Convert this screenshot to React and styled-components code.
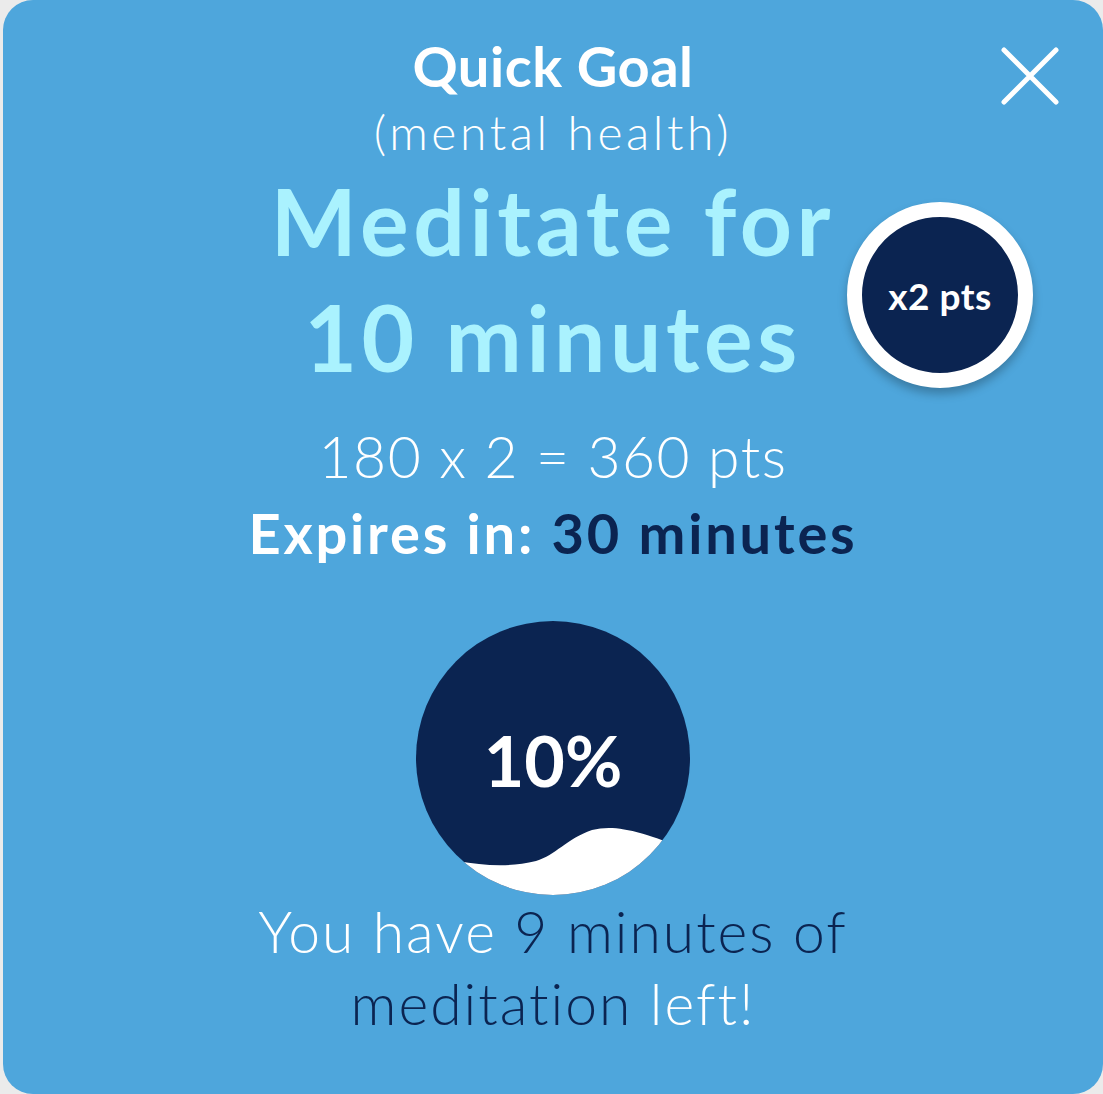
import React from 'react'
import styled, { createGlobalStyle } from 'styled-components'

const GlobalStyle = createGlobalStyle`
  html, body {
    margin: 0;
    padding: 0;
    background: #ebebeb;
  }
  body {
    font-family: Lato, "Open Sans", sans-serif;
    font-variant-ligatures: none;
  }
`

const navy = '#0b2451'
const sky = '#4ea6dc'
const cyan = '#aaf2fe'

const Card = styled.div`
  position: relative;
  box-sizing: border-box;
  margin-left: 3px;
  width: 1100px;
  height: 1094px;
  border-radius: 30px;
  background: ${sky};
  padding-top: 34px;
  display: flex;
  flex-direction: column;
  align-items: center;
  color: white;
  text-align: center;
`

const Title = styled.div`
  font-size: 56px;
  line-height: 64px;
  font-weight: 700;
  letter-spacing: 0.5px;
`

const Category = styled.div`
  margin-top: 8px;
  font-size: 48px;
  line-height: 52px;
  font-weight: 300;
  letter-spacing: 3.6px;
`

const Goal = styled.div`
  margin-top: 5px;
  font-size: 91px;
  line-height: 116px;
  font-weight: 700;
  letter-spacing: 4.6px;
  color: ${cyan};
`

const Points = styled.div`
  margin-top: 29px;
  font-size: 57px;
  line-height: 64px;
  font-weight: 300;
  letter-spacing: 1.5px;
`

const Expires = styled.div`
  margin-top: 13px;
  font-size: 56px;
  line-height: 64px;
  font-weight: 700;
  letter-spacing: 2.8px;
`

const Dark = styled.span`
  color: ${navy};
`

const Progress = styled.div`
  position: relative;
  margin-top: 56px;
  width: 274px;
  height: 274px;
  border-radius: 50%;
  overflow: hidden;
  background: ${navy};
  display: flex;
  align-items: center;
  justify-content: center;
`

const Wave = styled.svg`
  position: absolute;
  left: 0;
  top: 0;
`

const Percent = styled.div`
  position: relative;
  margin-top: 4px;
  font-size: 70px;
  line-height: 1;
  font-weight: 700;
`

const Remaining = styled.div`
  font-size: 57px;
  line-height: 72px;
  font-weight: 300;
  letter-spacing: 2px;
`

const Close = styled.button`
  position: absolute;
  top: 46px;
  right: 43px;
  width: 60px;
  height: 60px;
  padding: 0;
  border: 0;
  background: none;
  cursor: pointer;
`

const Badge = styled.div`
  position: absolute;
  left: 844px;
  top: 202px;
  box-sizing: border-box;
  width: 186px;
  height: 186px;
  border-radius: 50%;
  border: 15px solid white;
  background: ${navy};
  box-shadow: 0 6px 10px rgba(0, 0, 0, 0.25);
  display: flex;
  align-items: center;
  justify-content: center;
  font-size: 37px;
  font-weight: 700;
  letter-spacing: 0.5px;
  color: white;
`

export default function App() {
  return (
    <>
      <GlobalStyle />
      <Card>
        <Close aria-label="Close">
          <svg width="60" height="60" viewBox="0 0 60 60">
            <path
              d="M4 4 L56 56 M56 4 L4 56"
              stroke="white"
              strokeWidth="5"
              strokeLinecap="round"
              fill="none"
            />
          </svg>
        </Close>
        <Title>Quick Goal</Title>
        <Category>(mental health)</Category>
        <Goal>
          Meditate for
          <br />
          10 minutes
        </Goal>
        <Points>180 x 2 = 360 pts</Points>
        <Expires>
          Expires in: <Dark>30 minutes</Dark>
        </Expires>
        <Progress>
          <Wave width="274" height="274" viewBox="0 0 274 274">
            <path
              d="M0 232 C40 240 80 250 120 240 C140 234 150 218 176 209 C200 203 225 210 280 232 L280 280 L0 280 Z"
              fill="white"
            />
          </Wave>
          <Percent>10%</Percent>
        </Progress>
        <Remaining>
          You have <Dark>9 minutes of</Dark>
          <br />
          <Dark>meditation</Dark> left!
        </Remaining>
        <Badge>x2 pts</Badge>
      </Card>
    </>
  )
}
